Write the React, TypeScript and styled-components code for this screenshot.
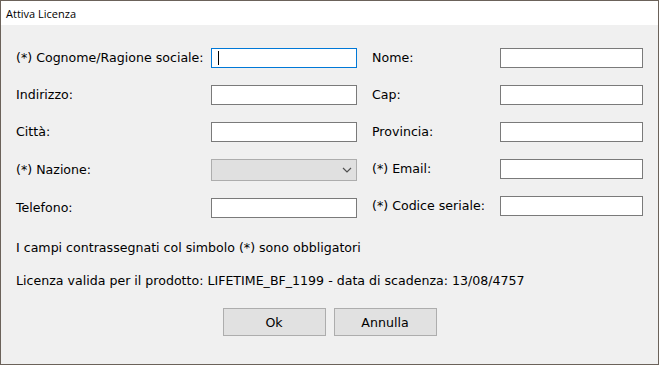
import React from "react";
import styled, { createGlobalStyle } from "styled-components";

const Global = createGlobalStyle`
  html, body { margin: 0; padding: 0; background: #6b625a; }
  * { box-sizing: border-box; }
`;

const Window = styled.div`
  width: 659px;
  height: 365px;
  border: 1px solid #6b625a;
  background: #f0f0f0;
  display: flex;
  flex-direction: column;
  font-family: "DejaVu Sans", Verdana, sans-serif;
  font-size: 12.6px;
  color: #000;
`;

const TitleBar = styled.div`
  height: 24px;
  flex: none;
  background: #fff;
  display: flex;
  align-items: center;
  padding-left: 5px;
  font-family: "Open Sans", "Noto Sans", sans-serif;
  font-size: 11px;
  color: #000;
`;

const Body = styled.div`
  flex: 1;
  display: flex;
  flex-direction: column;
  padding: 23px 15px 0 15px;
`;

const FormGrid = styled.div`
  display: grid;
  grid-template-columns: 195px 161px 128px 143px;
  grid-auto-rows: 20px;
  row-gap: 17px;
  align-items: start;
`;

const Label = styled.div<{ $h?: number; $offset?: number }>`
  line-height: ${(p) => p.$h ?? 20}px;
  margin-top: ${(p) => p.$offset ?? 0}px;
  white-space: nowrap;
`;

const FieldWrap = styled.div<{ $offset?: number }>`
  position: relative;
  margin-top: ${(p) => p.$offset ?? 0}px;
`;

const TextBox = styled.input<{ $w: number; $focused?: boolean }>`
  display: block;
  width: ${(p) => p.$w}px;
  height: 20px;
  margin: 0;
  padding: 0 4px;
  background: #fff;
  border: 1px solid ${(p) => (p.$focused ? "#0078d7" : "#7a7a7a")};
  border-radius: 0;
  outline: none;
  font: inherit;
`;

const Caret = styled.span`
  position: absolute;
  left: 7px;
  top: 3px;
  width: 1px;
  height: 14px;
  background: #000;
`;

const SelectBox = styled.div<{ $w: number }>`
  width: ${(p) => p.$w}px;
  height: 22px;
  background: #e0e0e0;
  border: 1px solid #adadad;
  display: flex;
  align-items: center;
  justify-content: flex-end;
  padding-right: 4px;
`;

const Note = styled.div<{ $gap: number }>`
  margin-top: ${(p) => p.$gap}px;
  line-height: 16px;
  white-space: nowrap;
`;

const ButtonRow = styled.div`
  margin-top: 19px;
  display: flex;
  justify-content: center;
  gap: 8px;
`;

const Button = styled.button`
  width: 103px;
  height: 28px;
  margin: 0;
  padding: 0;
  background: #e1e1e1;
  border: 1px solid #adadad;
  border-radius: 0;
  font: inherit;
  color: #000;
`;

const Chevron = () => (
  <svg width="10" height="6" viewBox="0 0 10 6">
    <path d="M1 1 L5 5 L9 1" fill="none" stroke="#505050" strokeWidth="1.2" />
  </svg>
);

export default function App() {
  return (
    <>
      <Global />
      <Window>
        <TitleBar>Attiva Licenza</TitleBar>
        <Body>
          <FormGrid>
            <Label>(*) Cognome/Ragione sociale:</Label>
            <FieldWrap>
              <TextBox $w={146} $focused readOnly />
              <Caret />
            </FieldWrap>
            <Label>Nome:</Label>
            <TextBox $w={143} readOnly />

            <Label>Indirizzo:</Label>
            <TextBox $w={146} readOnly />
            <Label>Cap:</Label>
            <TextBox $w={143} readOnly />

            <Label>Città:</Label>
            <TextBox $w={146} readOnly />
            <Label>Provincia:</Label>
            <TextBox $w={143} readOnly />

            <Label $h={22}>(*) Nazione:</Label>
            <SelectBox $w={146}>
              <Chevron />
            </SelectBox>
            <Label>(*) Email:</Label>
            <TextBox $w={143} readOnly />

            <Label $offset={2}>Telefono:</Label>
            <FieldWrap $offset={2}>
              <TextBox $w={146} readOnly />
            </FieldWrap>
            <Label>(*) Codice seriale:</Label>
            <TextBox $w={143} readOnly />
          </FormGrid>
          <Note $gap={24}>I campi contrassegnati col simbolo (*) sono obbligatori</Note>
          <Note $gap={17}>
            Licenza valida per il prodotto: LIFETIME_BF_1199 - data di scadenza: 13/08/4757
          </Note>
          <ButtonRow>
            <Button>Ok</Button>
            <Button>Annulla</Button>
          </ButtonRow>
        </Body>
      </Window>
    </>
  );
}
